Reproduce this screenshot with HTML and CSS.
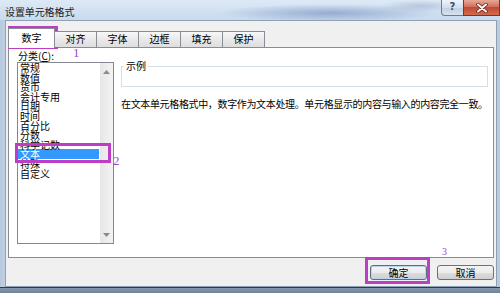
FILE: index.html
```html
<!DOCTYPE html>
<html lang="zh">
<head>
<meta charset="utf-8">
<title>设置单元格格式</title>
<link rel="stylesheet" href="styles.css">
</head>
<body>
<div class="window">
  <div class="titlebar">
    <span class="title">设置单元格格式</span>
    <div class="caption">
      <span class="help">?</span>
      <span class="close"><svg width="12" height="10" viewBox="0 0 12 10"><path d="M2 1.5 L10 8.5 M10 1.5 L2 8.5" stroke="#5a1a10" stroke-width="3.4" stroke-linecap="round"/><path d="M2 1.5 L10 8.5 M10 1.5 L2 8.5" stroke="#fff" stroke-width="2" stroke-linecap="round"/></svg></span>
    </div>
  </div>
  <div class="body">
    <div class="tabs">
      <div class="tab active">数字</div>
      <div class="tab">对齐</div>
      <div class="tab">字体</div>
      <div class="tab">边框</div>
      <div class="tab">填充</div>
      <div class="tab">保护</div>
    </div>
    <div class="panel">
      <div class="left">
        <div class="label">分类(<u>C</u>):</div>
        <div class="listbox">
          <ul class="items">
            <li>常规</li>
            <li>数值</li>
            <li>货币</li>
            <li>会计专用</li>
            <li>日期</li>
            <li>时间</li>
            <li>百分比</li>
            <li>分数</li>
            <li>科学记数</li>
            <li class="selected">文本</li>
            <li>特殊</li>
            <li>自定义</li>
          </ul>
          <div class="scrollbar">
            <svg width="7" height="4" viewBox="0 0 7 4"><path d="M0 4 L3.5 0 L7 4 Z" fill="#8a8a8a"/></svg>
            <svg width="7" height="4" viewBox="0 0 7 4"><path d="M0 0 L3.5 4 L7 0 Z" fill="#8a8a8a"/></svg>
          </div>
        </div>
      </div>
      <div class="right">
        <fieldset class="sample"><legend>示例</legend></fieldset>
        <p class="desc">在文本单元格格式中，数字作为文本处理。单元格显示的内容与输入的内容完全一致。</p>
      </div>
    </div>
    <div class="buttons">
      <button class="btn default">确定</button>
      <button class="btn">取消</button>
    </div>
  </div>
  <div class="bottom"></div>

  <div class="mark box1"></div>
  <span class="num n1">1</span>
  <div class="mark box2"></div>
  <span class="num n2">2</span>
  <div class="mark box3"></div>
  <span class="num n3">3</span>
</div>
</body>
</html>
```

FILE: styles.css
```css
* { box-sizing: border-box; margin: 0; padding: 0; }
html, body { width: 500px; height: 293px; overflow: hidden; }
body {
  font-family: "Noto Sans CJK SC", "Noto Sans", sans-serif;
  font-size: 10px;
  color: #000;
}
.window {
  position: relative;
  width: 500px;
  height: 293px;
  display: flex;
  flex-direction: column;
  background: linear-gradient(90deg, #b7c9de, #cfdef0 3%, #cfdef0 97%, #b7c9de);
}
.titlebar {
  height: 20px;
  display: flex;
  align-items: flex-start;
  background:
    radial-gradient(ellipse 110px 9px at 330px 13px, rgba(80, 110, 170, 0.45), transparent),
    radial-gradient(ellipse 40px 6px at 420px 6px, rgba(120, 140, 180, 0.35), transparent),
    linear-gradient(#dde9f6, #c8daee);
}
.title {
  padding: 6px 0 0 5px;
  line-height: 12px;
  font-size: 10px;
  color: #1a1a1a;
  letter-spacing: -0.1px;
}
.caption {
  margin-left: auto;
  display: flex;
  height: 16px;
}
.help {
  width: 22px;
  height: 16px;
  border: 1px solid #6a7d96;
  border-top: none;
  border-right: none;
  border-radius: 0 0 0 4px;
  background: linear-gradient(#eef3fa, #d3dfec 50%, #bfd0e3 51%, #d6e2ef);
  font-family: "DejaVu Sans", sans-serif;
  font-size: 10px;
  font-weight: bold;
  color: #3d4e66;
  text-align: center;
  line-height: 14px;
}
.close {
  width: 37px;
  height: 16px;
  border: 1px solid #6a3a34;
  border-top: none;
  background: linear-gradient(#e8a898, #d2705c 45%, #c04a34 50%, #d46a4e);
  display: flex;
  align-items: center;
  justify-content: center;
}
.body {
  margin: 0 3px 0 5px;
  height: 267px;
  background: #f0f0f0;
  border: 1px solid #8fa0b5;
  display: flex;
  flex-direction: column;
}
.tabs {
  display: flex;
  align-items: flex-end;
  height: 20px;
  margin: 6px 0 0 2px;
  position: relative;
  z-index: 2;
}
.tab {
  width: 43px;
  height: 16px;
  margin-left: -1px;
  border: 1px solid #898c95;
  border-bottom: none;
  background: linear-gradient(#f7f7f7, #e9e9e9 50%, #dedede);
  text-align: center;
  line-height: 14px;
  font-size: 10px;
}
.tab.active {
  margin-left: 0;
  width: 47px;
  height: 20px;
  margin-bottom: -1px;
  background: #fff;
  line-height: 18px;
  position: relative;
  z-index: 3;
}
.panel {
  margin: 0 2px;
  height: 211px;
  background: #fff;
  border: 1px solid #898c95;
  padding: 2px 5px 0 8px;
  display: flex;
  gap: 7px;
}
.left {
  width: 97px;
  display: flex;
  flex-direction: column;
}
.label {
  line-height: 12px;
  padding-left: 1px;
}
.label u { text-decoration: underline; }
.listbox {
  height: 182px;
  border: 1px solid #828790;
  display: flex;
}
.items {
  flex: 1;
  list-style: none;
  padding-top: 0;
}
.items li {
  line-height: 9.6px;
  height: 9.6px;
  padding-left: 2px;
  white-space: nowrap;
}
.items li.selected {
  background: #3399ff;
  color: #fff;
  margin-right: 1px;
}
.scrollbar {
  width: 13px;
  background: linear-gradient(90deg, #e6e6e6, #f3f3f3);
  display: flex;
  flex-direction: column;
  justify-content: space-between;
  align-items: center;
  padding: 7px 0 6px;
}
.right {
  width: 367px;
  display: flex;
  flex-direction: column;
}
.sample {
  margin-top: 10px;
  height: 27px;
  border: 1px solid #d5dfe5;
  padding: 0 0 0 2px;
}
.sample legend {
  padding: 0 2px;
  line-height: 12px;
  font-size: 10px;
}
.desc {
  margin-top: 11px;
  line-height: 12px;
  white-space: nowrap;
  letter-spacing: -0.35px;
}
.buttons {
  display: flex;
  justify-content: flex-end;
  gap: 10px;
  margin: 7px 2px 0 0;
}
.btn {
  width: 57px;
  height: 15px;
  border: 1px solid #707070;
  border-radius: 3px;
  background: linear-gradient(#f4f4f4, #ececec 50%, #dddddd 51%, #d0d0d0);
  font-family: "Noto Sans CJK SC", "Noto Sans", sans-serif;
  font-size: 10px;
  line-height: 13px;
  color: #000;
}
.btn.default {
  border-color: #5a6f8a;
  box-shadow: inset 0 0 0 1px #b9d4ec;
}
.bottom {
  height: 6px;
  border-top: 1px solid #2f3b4a;
  background: linear-gradient(#8597ad, #6f839b);
}
.mark {
  position: absolute;
  border: 3px solid #bb3ec4;
}
.box1 { left: 8px; top: 26px; width: 50px; height: 23px; }
.box2 { left: 15px; top: 143px; width: 96px; height: 20px; }
.box3 { left: 365px; top: 257px; width: 65px; height: 27px; }
.num {
  position: absolute;
  font-family: "Liberation Serif", serif;
  color: #9a4cc4;
  line-height: 1;
}
.n1 { left: 73px; top: 46px; font-size: 13px; }
.n2 { left: 113px; top: 154px; font-size: 13px; }
.n3 { left: 442px; top: 247px; font-size: 10px; }
```
